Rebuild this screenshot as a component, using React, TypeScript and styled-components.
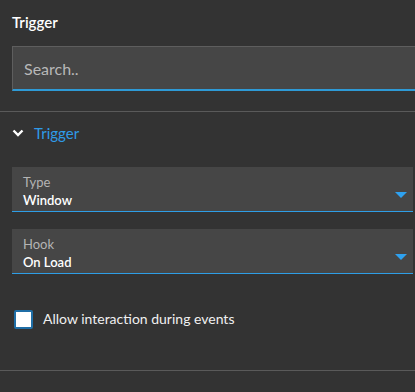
import React, { useState } from 'react';
import styled, { createGlobalStyle } from 'styled-components';

const GlobalStyle = createGlobalStyle`
    html, body {
        margin: 0;
        padding: 0;
        background: #333333;
        overflow: hidden;
    }
    body {
        font-family: Lato, "Noto Sans", sans-serif;
        color: #f2f2f2;
    }
`;

interface SelectFieldProps {
    label: string;
    value: string;
}

const SelectField: React.FC<SelectFieldProps> = ({ label, value }) => {
    return (
        <Select>
            <SelectText>
                <SelectLabel>{label}</SelectLabel>
                <SelectValue>{value}</SelectValue>
            </SelectText>
            <Arrow width='12' height='6' viewBox='0 0 12 6'>
                <polygon points='0,0 12,0 6,6' fill='#2ea1f0' />
            </Arrow>
        </Select>
    )
}

const App: React.FC = () => {
    const [search, setSearch] = useState('');
    const [open] = useState(true);
    const [allow, setAllow] = useState(false);

    return (
        <Panel>
            <GlobalStyle />
            <Section>
                <Heading>Trigger</Heading>
                <SearchInput
                value={search}
                onChange={(e) => setSearch(e.target.value)}
                placeholder='Search..' />
            </Section>
            <Section>
                <AccordionHeader>
                    <svg width='12' height='8' viewBox='0 0 12 8'>
                        <polyline points='1.5,1.5 6,6 10.5,1.5' fill='none' stroke='#ffffff' strokeWidth='2.4' />
                    </svg>
                    <AccordionTitle>Trigger</AccordionTitle>
                </AccordionHeader>
                {open && (
                    <Fields>
                        <SelectField label='Type' value='Window' />
                        <SelectField label='Hook' value='On Load' />
                    </Fields>
                )}
                <CheckRow onClick={() => setAllow(!allow)}>
                    <CheckBox checked={allow} />
                    <CheckLabel>Allow interaction during events</CheckLabel>
                </CheckRow>
            </Section>
        </Panel>
    )
}

const Panel = styled.div`
    width: 415px;
    height: 392px;
    background: #333333;
`;

const Section = styled.div`
    padding: 0 0 20px 12px;
    border-bottom: 1px solid #5a5a5a;
    &:last-child {
        padding-bottom: 41px;
    }
`;

const Heading = styled.div`
    padding-top: 12px;
    font-size: 15px;
    font-weight: 600;
    line-height: 20px;
    color: #ffffff;
    margin-bottom: 14px;
`;

const SearchInput = styled.input`
    box-sizing: border-box;
    display: block;
    width: calc(100% + 4px);
    height: 45px;
    padding: 0 11px;
    background: #464646;
    border: 1px solid #5e5e5e;
    border-bottom: 2px solid #2e9ad6;
    color: #e0e0e0;
    font-family: Lato, "Noto Sans", sans-serif;
    font-size: 16px;
    outline: none;
    &::placeholder {
        color: #b8b8b8;
    }
`;

const AccordionHeader = styled.div`
    display: flex;
    align-items: center;
    gap: 10px;
    margin-top: 11px;
    height: 20px;
`;

const AccordionTitle = styled.span`
    color: #2f9be8;
    font-size: 15px;
    line-height: 20px;
`;

const Fields = styled.div`
    display: flex;
    flex-direction: column;
    gap: 17px;
    margin-top: 24px;
    padding-right: 2px;
`;

const Select = styled.div`
    box-sizing: border-box;
    height: 45px;
    display: flex;
    align-items: center;
    justify-content: space-between;
    padding: 5px 6px 0 11px;
    background: #464646;
    border-bottom: 1px solid #2e9ee6;
`;

const SelectText = styled.div`
    display: flex;
    flex-direction: column;
`;

const SelectLabel = styled.span`
    font-size: 13px;
    line-height: 17px;
    color: #b4b4b4;
`;

const SelectValue = styled.span`
    font-size: 13px;
    line-height: 18px;
    font-weight: 600;
    color: #ffffff;
`;

const Arrow = styled.svg`
    margin-top: 6px;
`;

const CheckRow = styled.label`
    display: flex;
    align-items: center;
    gap: 10px;
    margin-top: 35px;
    padding-left: 2px;
    cursor: pointer;
`;

const CheckBox = styled.span<{ checked: boolean }>`
    box-sizing: border-box;
    width: 19px;
    height: 19px;
    border: 2px solid #1f6ea6;
    border-radius: 2px;
    background: ${props => props.checked ? '#2e9ee6' : '#ffffff'};
`;

const CheckLabel = styled.span`
    font-size: 14px;
    line-height: 20px;
    color: #f0f0f0;
`;

export default App;
